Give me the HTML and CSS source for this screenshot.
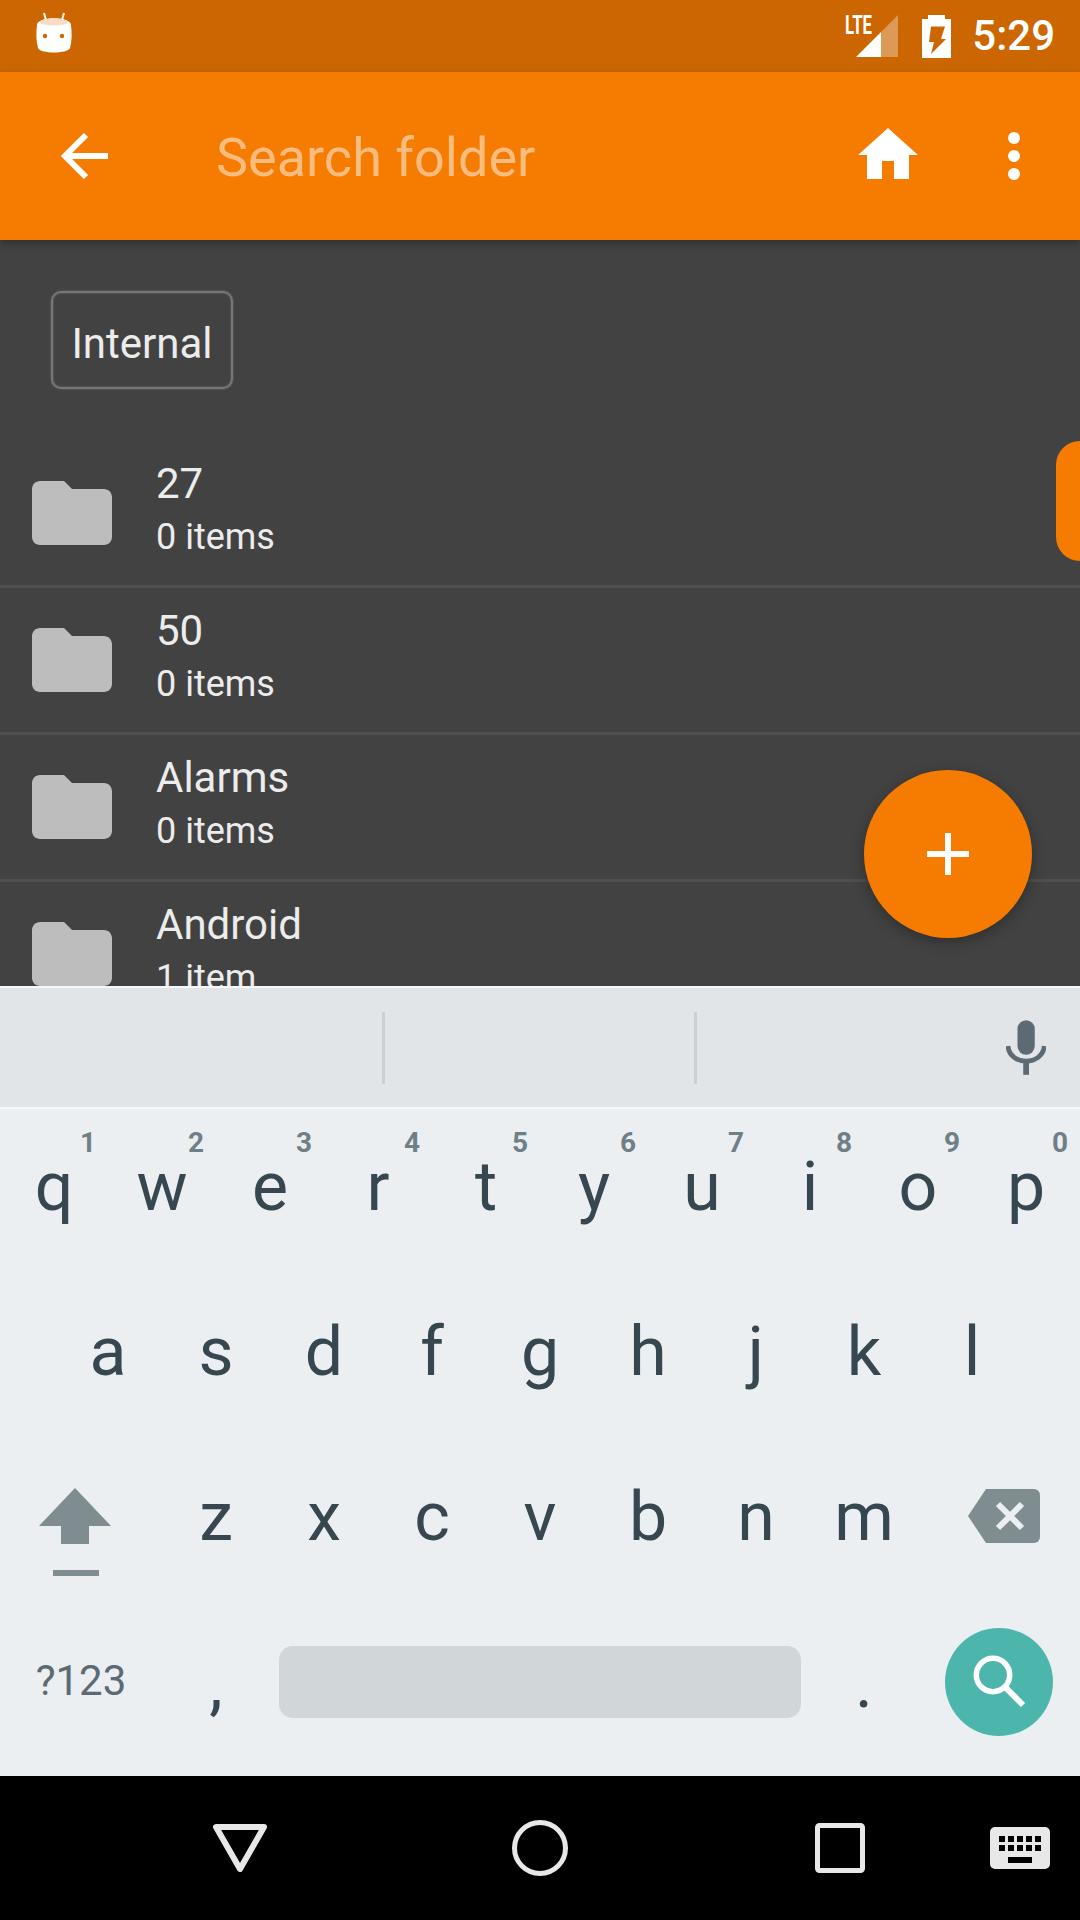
FILE: index.html
```html
<!DOCTYPE html>
<html lang="en">
<head>
  <meta charset="UTF-8">
  <title>Search folder</title>
  <meta name="viewport" content="width=device-width, initial-scale=1.0">
  <link rel="stylesheet" href="styles.css">
</head>
<body>
  <div class="screen">

    <div class="statusbar">
      <svg class="robot" width="34" height="40" viewBox="0 0 34 40">
        <path d="M9 7L7 0M25 7L27 0" stroke="#fff" stroke-width="2" fill="none"/>
        <path d="M0 12C0 3 34 3 34 12C35 20 35 28 33 35C31 41 3 41 1 35C-1 28 -1 20 0 12Z" fill="#fff"/>
        <ellipse cx="17" cy="9" rx="14" ry="3.5" fill="#f5dcc4"/>
        <circle cx="8" cy="23" r="2.2" fill="#cc6600"/>
        <circle cx="25" cy="23" r="2.2" fill="#cc6600"/>
      </svg>
      <div class="status-right">
        <svg class="signal" width="54" height="50" viewBox="0 -7 54 50">
          <polygon points="36,17 53,0 53,42 36,42" fill="#fff" opacity="0.34"/>
          <polygon points="11,42 36,17 36,42" fill="#fff"/>
          <text class="lte" x="0" y="19" textLength="27" lengthAdjust="spacingAndGlyphs">LTE</text>
        </svg>
        <svg class="battery" width="29" height="43" viewBox="0 0 29 43">
          <path fill-rule="evenodd" fill="#fff" d="M6 0H23V4H29V43H0V4H6ZM9 11.500L7 27H12L9 39L24 24H19L23 11.500Z"/>
        </svg>
        <span class="clock">5:29</span>
      </div>
    </div>

    <div class="appbar">
      <svg class="back" width="48" height="48" viewBox="0 0 48 48">
        <path d="M48 24H5M26 3L5 24L26 45" stroke="#fff" stroke-width="6" fill="none"/>
      </svg>
      <span class="search-hint">Search folder</span>
      <svg class="home" width="60" height="51" viewBox="2 3 20 17">
        <path d="M10 20v-6h4v6h5v-8h3L12 3 2 12h3v8z" fill="#fff"/>
      </svg>
      <svg class="more" width="12" height="48" viewBox="0 0 12 48">
        <circle cx="6" cy="6" r="6" fill="#fff"/>
        <circle cx="6" cy="24" r="6" fill="#fff"/>
        <circle cx="6" cy="42" r="6" fill="#fff"/>
      </svg>
    </div>

    <div class="content">
      <div class="chip">Internal</div>

      <div class="row">
        <svg class="folder" width="96" height="96" viewBox="0 0 24 24"><path d="M10 4H4c-1.1 0-2 .9-2 2v12c0 1.1.9 2 2 2h16c1.1 0 2-.9 2-2V8c0-1.1-.9-2-2-2h-8l-2-2z"/></svg>
        <div class="row-text">
          <div class="row-name">27</div>
          <div class="row-count">0 items</div>
        </div>
      </div>
      <div class="row">
        <svg class="folder" width="96" height="96" viewBox="0 0 24 24"><path d="M10 4H4c-1.1 0-2 .9-2 2v12c0 1.1.9 2 2 2h16c1.1 0 2-.9 2-2V8c0-1.1-.9-2-2-2h-8l-2-2z"/></svg>
        <div class="row-text">
          <div class="row-name">50</div>
          <div class="row-count">0 items</div>
        </div>
      </div>
      <div class="row">
        <svg class="folder" width="96" height="96" viewBox="0 0 24 24"><path d="M10 4H4c-1.1 0-2 .9-2 2v12c0 1.1.9 2 2 2h16c1.1 0 2-.9 2-2V8c0-1.1-.9-2-2-2h-8l-2-2z"/></svg>
        <div class="row-text">
          <div class="row-name">Alarms</div>
          <div class="row-count">0 items</div>
        </div>
      </div>
      <div class="row">
        <svg class="folder" width="96" height="96" viewBox="0 0 24 24"><path d="M10 4H4c-1.1 0-2 .9-2 2v12c0 1.1.9 2 2 2h16c1.1 0 2-.9 2-2V8c0-1.1-.9-2-2-2h-8l-2-2z"/></svg>
        <div class="row-text">
          <div class="row-name">Android</div>
          <div class="row-count">1 item</div>
        </div>
      </div>

      <div class="side-tab"></div>
      <div class="fab">
        <svg width="42" height="42" viewBox="0 0 42 42"><path d="M18 0h6v18h18v6H24v18h-6V24H0v-6h18z" fill="#fff"/></svg>
      </div>
    </div>

    <div class="keyboard">
      <div class="strip">
        <div class="strip-line"></div>
        <div class="strip-line"></div>
        <svg class="mic" width="42" height="57" viewBox="0 0 42 57">
          <rect x="12" y="0" width="18" height="36" rx="9" fill="#5c6b73"/>
          <path d="M2 27C4 48 38 48 40 27" stroke="#5c6b73" stroke-width="5" fill="none"/>
          <rect x="18" y="44" width="6" height="13" fill="#5c6b73"/>
        </svg>
      </div>

      <div class="key-row">
        <div class="key">q<span class="hint">1</span></div>
        <div class="key">w<span class="hint">2</span></div>
        <div class="key">e<span class="hint">3</span></div>
        <div class="key">r<span class="hint">4</span></div>
        <div class="key">t<span class="hint">5</span></div>
        <div class="key">y<span class="hint">6</span></div>
        <div class="key">u<span class="hint">7</span></div>
        <div class="key">i<span class="hint">8</span></div>
        <div class="key">o<span class="hint">9</span></div>
        <div class="key">p<span class="hint">0</span></div>
      </div>

      <div class="key-row key-row-home">
        <div class="key">a</div>
        <div class="key">s</div>
        <div class="key">d</div>
        <div class="key">f</div>
        <div class="key">g</div>
        <div class="key">h</div>
        <div class="key">j</div>
        <div class="key">k</div>
        <div class="key">l</div>
      </div>

      <div class="key-row">
        <div class="key key-wide key-shift">
          <svg width="72" height="88" viewBox="0 0 72 88">
            <path d="M36 0L72 38H50V56H22V38H0Z" fill="#7f8c90"/>
            <rect x="14" y="82" width="46" height="6" fill="#7f8c90"/>
          </svg>
        </div>
        <div class="key">z</div>
        <div class="key">x</div>
        <div class="key">c</div>
        <div class="key">v</div>
        <div class="key">b</div>
        <div class="key">n</div>
        <div class="key">m</div>
        <div class="key key-wide key-delete">
          <svg width="72" height="54" viewBox="0 0 72 54">
            <path d="M18 0H66a6 6 0 0 1 6 6V48a6 6 0 0 1-6 6H18L0 27Z" fill="#7f8c90"/>
            <path d="M30 15L54 39M54 15L30 39" stroke="#ebeff2" stroke-width="6" fill="none"/>
          </svg>
        </div>
      </div>

      <div class="key-row">
        <div class="key key-wide key-symbols">?123</div>
        <div class="key key-punct">,</div>
        <div class="key key-space"><div class="spacebar"></div></div>
        <div class="key key-punct">.</div>
        <div class="key key-wide key-action">
          <div class="action-circle">
            <svg width="54" height="54" viewBox="0 0 54 54">
              <circle cx="21" cy="20" r="16.700" stroke="#fff" stroke-width="5.500" fill="none"/>
              <path d="M33 32L51 50" stroke="#fff" stroke-width="6" fill="none"/>
            </svg>
          </div>
        </div>
      </div>
    </div>

    <div class="navbar">
      <div class="nav-item">
        <svg width="54" height="48" viewBox="0 0 54 48">
          <path d="M3 3H51L27 45Z" stroke="#e8e8e8" stroke-width="6" stroke-linejoin="round" fill="none"/>
        </svg>
      </div>
      <div class="nav-item">
        <svg width="56" height="56" viewBox="0 0 56 56">
          <circle cx="28" cy="28" r="25.500" stroke="#e8e8e8" stroke-width="5" fill="none"/>
        </svg>
      </div>
      <div class="nav-item">
        <svg width="50" height="50" viewBox="0 0 50 50">
          <rect x="2.500" y="2.500" width="45" height="45" rx="2" stroke="#e8e8e8" stroke-width="5" fill="none"/>
        </svg>
      </div>
      <div class="nav-item">
        <svg width="60" height="42" viewBox="0 0 60 42">
          <rect width="60" height="42" rx="5" fill="#e8e8e8"/>
          <path d="M9 9h6v6H9zM18 9h6v6h-6zM27 9h6v6h-6zM36 9h6v6h-6zM45 9h6v6h-6zM9 18h6v6H9zM18 18h6v6h-6zM27 18h6v6h-6zM36 18h6v6h-6zM45 18h6v6h-6zM18 30h24v6H18z" fill="#000"/>
        </svg>
      </div>
    </div>

  </div>
</body>
</html>
```

FILE: styles.css
```css
body {
  margin: 0;
  padding: 0;
  font-family: Roboto, sans-serif;
  background: #000;
}

.screen {
  width: 1080px;
  height: 1920px;
  display: flex;
  flex-direction: column;
  overflow: hidden;
}

/* status bar */
.statusbar {
  height: 72px;
  background: #cc6600;
  display: flex;
  align-items: center;
  justify-content: space-between;
  padding: 0 25px 0 37px;
  flex: none;
}

.robot {
  overflow: visible;
  margin-top: -6px;
}

.status-right {
  display: flex;
  align-items: center;
}

.signal {
  margin-right: 23px;
  margin-top: -7px;
}

.lte {
  font-family: Roboto, sans-serif;
  font-size: 25px;
  font-weight: 700;
  fill: #fff;
}

.battery {
  margin-right: 21px;
}

.clock {
  color: #fff;
  font-size: 42px;
  font-weight: 500;
  line-height: 72px;
}

/* app bar */
.appbar {
  height: 168px;
  background: #f57c00;
  display: flex;
  align-items: center;
  padding-left: 60px;
  flex: none;
  position: relative;
  z-index: 2;
  box-shadow: 0 3px 8px rgba(0,0,0,0.3);
}

.back {
  margin-right: 108px;
}

.search-hint {
  color: #fabd7f;
  font-size: 54px;
  flex: 1;
  padding-top: 2px;
}

.home {
  margin-right: 90px;
  margin-top: -6px;
}

.more {
  margin-right: 60px;
}

/* folder list */
.content {
  flex: 1;
  position: relative;
  overflow: hidden;
  background: #424242;
}

.chip {
  width: 182px;
  height: 98px;
  margin: 51px 0 52px 51px;
  padding-top: 6px;
  box-sizing: border-box;
  border: 2px solid #767676;
  border-radius: 10px;
  box-shadow: 0 0 2px #767676, inset 0 0 2px #767676;
  color: #ececec;
  font-size: 42px;
  line-height: 90px;
  text-align: center;
}

.row {
  height: 147px;
  box-sizing: border-box;
  border-bottom: 3px solid #4f4f4f;
  display: flex;
  align-items: center;
  padding-left: 24px;
}

.folder {
  fill: #bdbdbd;
  flex: none;
  margin-right: 36px;
}

.row-text {
  color: #ececec;
  padding-bottom: 7px;
}

.row-name {
  font-size: 42px;
  line-height: 54px;
  margin-bottom: 1px;
}

.row-count {
  font-size: 36px;
  line-height: 50px;
}

.side-tab {
  position: absolute;
  top: 201px;
  right: 0;
  width: 24px;
  height: 120px;
  background: #f57c00;
  border-radius: 24px 0 0 24px;
}

.fab {
  position: absolute;
  top: 530px;
  right: 48px;
  width: 168px;
  height: 168px;
  border-radius: 50%;
  background: #f57c00;
  box-shadow: 0 4px 14px rgba(0,0,0,0.3);
  display: flex;
  align-items: center;
  justify-content: center;
}

/* keyboard */
.keyboard {
  height: 790px;
  background: #ebeff2;
  flex: none;
}

.strip {
  height: 123px;
  margin-bottom: -2px;
  box-sizing: border-box;
  background: #e1e5e8;
  border-top: 2px solid #f5f7f8;
  border-bottom: 2px solid #f5f7f8;
  display: flex;
  align-items: center;
  padding: 0 34px 0 382px;
}

.strip-line {
  width: 3px;
  height: 72px;
  background: #cbd0d3;
  margin-right: 309px;
}

.mic {
  margin-left: auto;
  margin-right: 0;
}

.key-row {
  height: 165px;
  display: flex;
}

.key-row-home {
  padding-left: 54px;
}

.key {
  width: 108px;
  height: 165px;
  padding-bottom: 4px;
  box-sizing: border-box;
  flex: none;
  position: relative;
  display: flex;
  align-items: center;
  justify-content: center;
  color: #37474f;
  font-size: 68px;
  line-height: 161px;
}

.hint {
  position: absolute;
  top: 20px;
  right: 12px;
  color: #6f7f87;
  font-size: 28px;
  font-weight: 700;
  line-height: 32px;
}

.key-wide {
  width: 162px;
}

.key-shift svg {
  margin-top: 29px;
  margin-right: 12px;
}

.key-delete svg {
  margin-bottom: 3px;
  margin-left: 10px;
}

.key-symbols {
  padding-bottom: 8px;
  color: #5c6b73;
  font-size: 42px;
}

.key-punct {
  padding-bottom: 0;
}

.key-space {
  width: 540px;
}

.spacebar {
  width: 522px;
  height: 72px;
  margin-bottom: 1px;
  border-radius: 14px;
  background: #d1d6d9;
}

.action-circle {
  width: 108px;
  height: 108px;
  margin-bottom: 1px;
  border-radius: 50%;
  background: #4db6ac;
  display: flex;
  align-items: center;
  justify-content: center;
}

/* nav bar */
.navbar {
  height: 144px;
  background: #000;
  display: grid;
  grid-template-columns: 300px 300px 300px 60px;
  padding-left: 90px;
  flex: none;
}

.nav-item {
  display: flex;
  align-items: center;
  justify-content: center;
}
```
